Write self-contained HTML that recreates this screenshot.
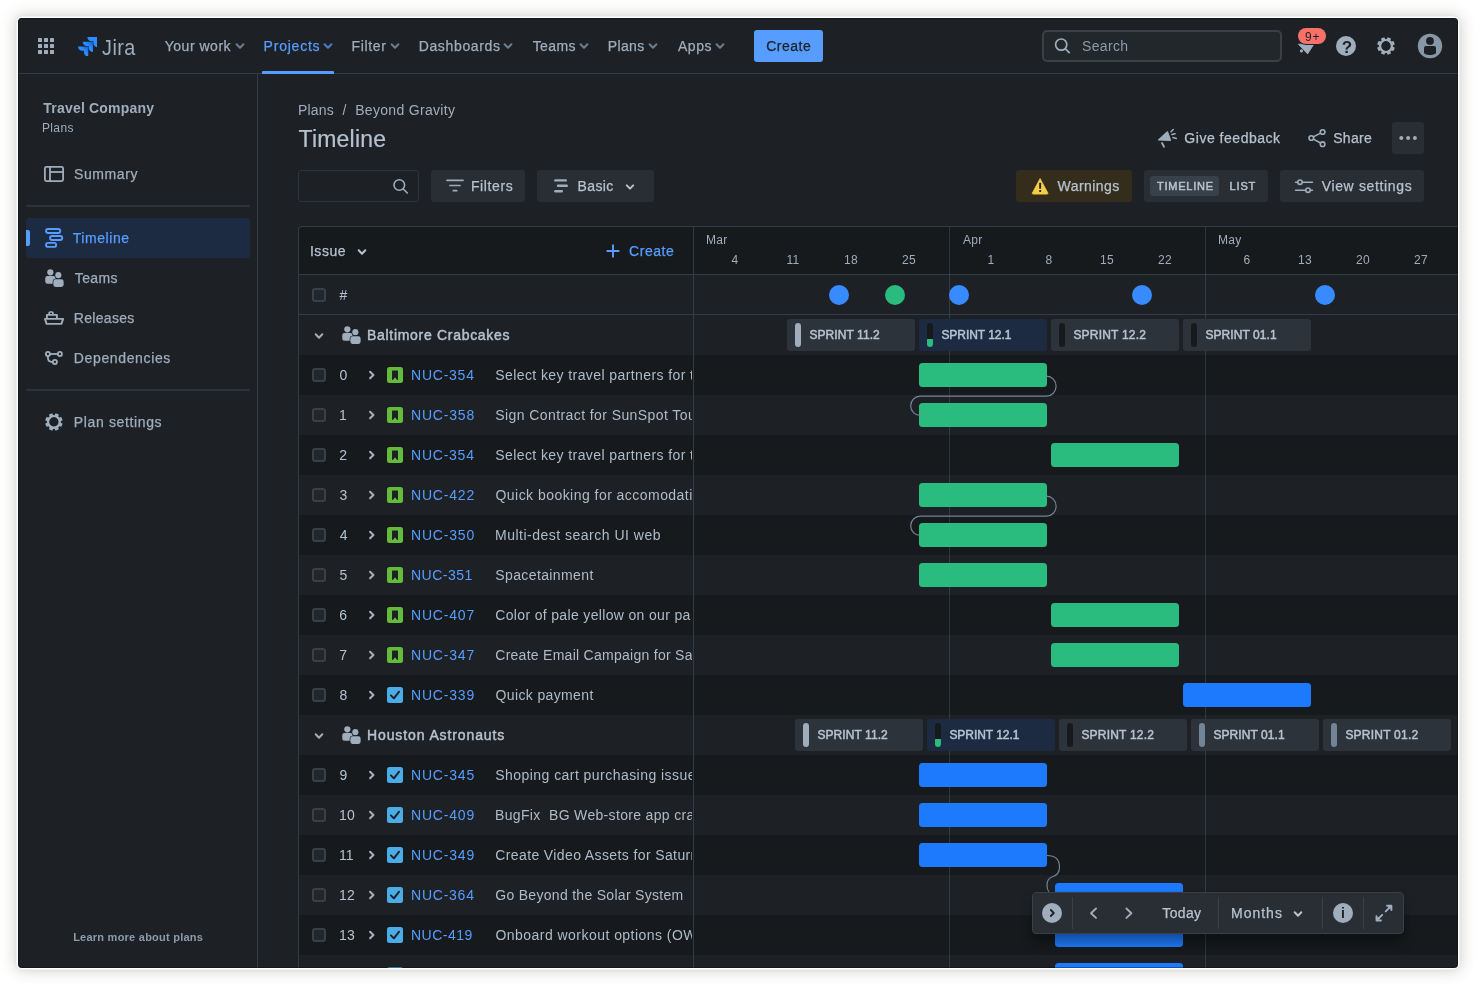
<!DOCTYPE html>
<html lang="en"><head><meta charset="utf-8"><title>Timeline - Beyond Gravity - Jira</title>
<style>
html,body{margin:0;padding:0}
body{width:1476px;height:986px;background:#fff;overflow:hidden;position:relative;font-family:"Liberation Sans",sans-serif;}
.shadow{position:absolute;left:18px;top:18px;width:1440px;height:950px;border-radius:4px;box-shadow:0 0 0 1px #fff,0 0 0 2px rgba(238,242,246,0.85),0 0 5px 1px rgba(40,40,25,0.07),0 0 15px 3px rgba(40,40,25,0.2);}
.win{position:absolute;left:18px;top:18px;width:1440px;height:950px;border-radius:4px;background:#1d2125;overflow:hidden;}
.pgc{position:absolute;left:-18px;top:-18px;width:1476px;height:986px;will-change:transform;}
.edge{position:absolute;left:18px;top:18px;width:1440px;height:950px;border-radius:4px;box-shadow:inset 0 0 0 1px rgba(0,0,0,0.32);pointer-events:none}
.b{position:absolute;display:block}
.t{position:absolute;white-space:pre;line-height:20px;font-size:14px}
</style></head>
<body>
<div class="shadow"></div>
<div class="win"><div class="pgc">
<div class="b" style="left:298px;top:226px;width:1160px;height:49px;background:#161a1d;border-top-left-radius:4px;"></div>
<div class="b" style="left:298px;top:355px;width:1160px;height:40px;background:#161a1d;"></div>
<div class="b" style="left:298px;top:435px;width:1160px;height:40px;background:#161a1d;"></div>
<div class="b" style="left:298px;top:515px;width:1160px;height:40px;background:#161a1d;"></div>
<div class="b" style="left:298px;top:595px;width:1160px;height:40px;background:#161a1d;"></div>
<div class="b" style="left:298px;top:675px;width:1160px;height:40px;background:#161a1d;"></div>
<div class="b" style="left:298px;top:755px;width:1160px;height:40px;background:#161a1d;"></div>
<div class="b" style="left:298px;top:835px;width:1160px;height:40px;background:#161a1d;"></div>
<div class="b" style="left:298px;top:915px;width:1160px;height:40px;background:#161a1d;"></div>
<div class="b" style="left:298px;top:226px;width:1160px;height:760px;border-top:1px solid #333b43;border-left:1px solid #333b43;border-top-left-radius:4px;box-sizing:border-box;"></div>
<div class="b" style="left:298px;top:274px;width:1160px;height:1px;background:#333b43;"></div>
<div class="b" style="left:298px;top:314px;width:1160px;height:1px;background:#333b43;"></div>
<div class="t" style="left:309.95px;top:241px;color:#b6c2cf;letter-spacing:0.537px;-webkit-text-stroke:0.25px;">Issue</div>
<svg class="b" style="left:354.00px;top:243.60px;" width="16.00" height="16.00" viewBox="354.00 243.60 16.00 16.00"><polyline points="358.70,249.90 362.00,253.30 365.30,249.90" fill="none" stroke="#b6c2cf" stroke-width="2" stroke-linecap="round" stroke-linejoin="round"/></svg>
<svg class="b" style="left:605.00px;top:243.00px;" width="16.00" height="16.00" viewBox="605.00 243.00 16.00 16.00"><path d="M613 245.300v11.400M607.300 251h11.400" stroke="#579dff" stroke-width="1.900" stroke-linecap="round" fill="none"/></svg>
<div class="t" style="left:629.05px;top:241px;color:#579dff;letter-spacing:0.550px;-webkit-text-stroke:0.25px;">Create</div>
<div class="b" style="left:312px;top:288px;width:14px;height:14px;background:#22272b;border-radius:3px;border:2px solid #38414a;box-sizing:border-box;"></div>
<div class="t" style="left:339.50px;top:285px;color:#b6c2cf;">#</div>
<svg class="b" style="left:311.00px;top:327.70px;" width="16.00" height="16.00" viewBox="311.00 327.70 16.00 16.00"><polyline points="315.70,334.00 319.00,337.40 322.30,334.00" fill="none" stroke="#9fadbc" stroke-width="2" stroke-linecap="round" stroke-linejoin="round"/></svg>
<svg class="b" style="left:341.8px;top:325.9px;" width="19.0" height="18.5" viewBox="-0.25 -0.25 19 18.5"><g fill="#9fadbc"><circle cx="5.1" cy="3.1" r="3.1"/><path d="M0 9a2.200 2.200 0 0 1 2.200-2.200h6a2.200 2.200 0 0 1 2.200 2.200v5.500h-8.200a2.200 2.200 0 0 1-2.200-2.200z"/><g stroke="#1d2125" stroke-width="1.300" paint-order="stroke"><circle cx="13.1" cy="5.900" r="3.050"/><path d="M8.100 12.400a2.300 2.300 0 0 1 2.300-2.300h5.700a2.300 2.300 0 0 1 2.300 2.300v2.600a2.800 2.800 0 0 1-2.800 2.800h-4.700a2.800 2.800 0 0 1-2.800-2.800z"/></g></g></svg>
<div class="t" style="left:367.00px;top:325px;color:#b6c2cf;letter-spacing:0.700px;-webkit-text-stroke:0.45px;">Baltimore Crabcakes</div>
<svg class="b" style="left:311.00px;top:727.70px;" width="16.00" height="16.00" viewBox="311.00 727.70 16.00 16.00"><polyline points="315.70,734.00 319.00,737.40 322.30,734.00" fill="none" stroke="#9fadbc" stroke-width="2" stroke-linecap="round" stroke-linejoin="round"/></svg>
<svg class="b" style="left:341.8px;top:725.9px;" width="19.0" height="18.5" viewBox="-0.25 -0.25 19 18.5"><g fill="#9fadbc"><circle cx="5.1" cy="3.1" r="3.1"/><path d="M0 9a2.200 2.200 0 0 1 2.200-2.200h6a2.200 2.200 0 0 1 2.200 2.200v5.500h-8.200a2.200 2.200 0 0 1-2.200-2.200z"/><g stroke="#1d2125" stroke-width="1.300" paint-order="stroke"><circle cx="13.1" cy="5.900" r="3.050"/><path d="M8.100 12.400a2.300 2.300 0 0 1 2.300-2.300h5.700a2.300 2.300 0 0 1 2.300 2.300v2.600a2.800 2.800 0 0 1-2.800 2.800h-4.700a2.800 2.800 0 0 1-2.800-2.800z"/></g></g></svg>
<div class="t" style="left:367.00px;top:725px;color:#b6c2cf;letter-spacing:0.891px;-webkit-text-stroke:0.45px;">Houston Astronauts</div>
<div class="b" style="left:0;top:0;width:692px;height:968px;overflow:hidden"><svg class="b" style="left:387px;top:367px;" width="16" height="16" viewBox="0 0 16 16"><rect width="16" height="16" rx="2.500" fill="#64ba3b"/><path d="M5 4.300a.7.700 0 0 1 .7-.7h4.600a.7.700 0 0 1 .7.700v8.300a.4.400 0 0 1-.7.300l-2.300-2.400l-2.300 2.400a.4.400 0 0 1-.7-.3z" fill="#1d2125"/></svg><div class="b" style="left:312px;top:368px;width:14px;height:14px;background:#22272b;border-radius:3px;border:2px solid #38414a;box-sizing:border-box;"></div><div class="t" style="left:339.50px;top:365px;color:#b6c2cf;letter-spacing:0.400px;">0</div><svg class="b" style="left:365.60px;top:368.20px;" width="12.00" height="14.00" viewBox="365.60 368.20 12.00 14.00"><polyline points="369.70,372.00 373.00,375.20 369.70,378.40" fill="none" stroke="#9fadbc" stroke-width="2.200" stroke-linecap="round" stroke-linejoin="round"/></svg><div class="t" style="left:411.00px;top:365px;color:#579dff;letter-spacing:0.767px;">NUC-354</div><div class="t" style="left:495.25px;top:365px;color:#afbbc8;letter-spacing:0.412px;">Select key travel partners for t</div><svg class="b" style="left:387px;top:407px;" width="16" height="16" viewBox="0 0 16 16"><rect width="16" height="16" rx="2.500" fill="#64ba3b"/><path d="M5 4.300a.7.700 0 0 1 .7-.7h4.600a.7.700 0 0 1 .7.700v8.300a.4.400 0 0 1-.7.300l-2.300-2.400l-2.300 2.400a.4.400 0 0 1-.7-.3z" fill="#1d2125"/></svg><div class="b" style="left:312px;top:408px;width:14px;height:14px;background:#22272b;border-radius:3px;border:2px solid #38414a;box-sizing:border-box;"></div><div class="t" style="left:339.00px;top:405px;color:#b6c2cf;letter-spacing:0.400px;">1</div><svg class="b" style="left:365.60px;top:408.20px;" width="12.00" height="14.00" viewBox="365.60 408.20 12.00 14.00"><polyline points="369.70,412.00 373.00,415.20 369.70,418.40" fill="none" stroke="#9fadbc" stroke-width="2.200" stroke-linecap="round" stroke-linejoin="round"/></svg><div class="t" style="left:411.00px;top:405px;color:#579dff;letter-spacing:0.808px;">NUC-358</div><div class="t" style="left:495.25px;top:405px;color:#afbbc8;letter-spacing:0.415px;">Sign Contract for SunSpot Tou</div><svg class="b" style="left:387px;top:447px;" width="16" height="16" viewBox="0 0 16 16"><rect width="16" height="16" rx="2.500" fill="#64ba3b"/><path d="M5 4.300a.7.700 0 0 1 .7-.7h4.600a.7.700 0 0 1 .7.700v8.300a.4.400 0 0 1-.7.300l-2.300-2.400l-2.300 2.400a.4.400 0 0 1-.7-.3z" fill="#1d2125"/></svg><div class="b" style="left:312px;top:448px;width:14px;height:14px;background:#22272b;border-radius:3px;border:2px solid #38414a;box-sizing:border-box;"></div><div class="t" style="left:339.25px;top:445px;color:#b6c2cf;letter-spacing:0.400px;">2</div><svg class="b" style="left:365.60px;top:448.20px;" width="12.00" height="14.00" viewBox="365.60 448.20 12.00 14.00"><polyline points="369.70,452.00 373.00,455.20 369.70,458.40" fill="none" stroke="#9fadbc" stroke-width="2.200" stroke-linecap="round" stroke-linejoin="round"/></svg><div class="t" style="left:411.00px;top:445px;color:#579dff;letter-spacing:0.767px;">NUC-354</div><div class="t" style="left:495.25px;top:445px;color:#afbbc8;letter-spacing:0.412px;">Select key travel partners for t</div><svg class="b" style="left:387px;top:487px;" width="16" height="16" viewBox="0 0 16 16"><rect width="16" height="16" rx="2.500" fill="#64ba3b"/><path d="M5 4.300a.7.700 0 0 1 .7-.7h4.600a.7.700 0 0 1 .7.700v8.300a.4.400 0 0 1-.7.300l-2.300-2.400l-2.300 2.400a.4.400 0 0 1-.7-.3z" fill="#1d2125"/></svg><div class="b" style="left:312px;top:488px;width:14px;height:14px;background:#22272b;border-radius:3px;border:2px solid #38414a;box-sizing:border-box;"></div><div class="t" style="left:339.50px;top:485px;color:#b6c2cf;letter-spacing:0.400px;">3</div><svg class="b" style="left:365.60px;top:488.20px;" width="12.00" height="14.00" viewBox="365.60 488.20 12.00 14.00"><polyline points="369.70,492.00 373.00,495.20 369.70,498.40" fill="none" stroke="#9fadbc" stroke-width="2.200" stroke-linecap="round" stroke-linejoin="round"/></svg><div class="t" style="left:411.00px;top:485px;color:#579dff;letter-spacing:0.808px;">NUC-422</div><div class="t" style="left:495.50px;top:485px;color:#afbbc8;letter-spacing:0.459px;">Quick booking for accomodati</div><svg class="b" style="left:387px;top:527px;" width="16" height="16" viewBox="0 0 16 16"><rect width="16" height="16" rx="2.500" fill="#64ba3b"/><path d="M5 4.300a.7.700 0 0 1 .7-.7h4.600a.7.700 0 0 1 .7.700v8.300a.4.400 0 0 1-.7.300l-2.300-2.400l-2.300 2.400a.4.400 0 0 1-.7-.3z" fill="#1d2125"/></svg><div class="b" style="left:312px;top:528px;width:14px;height:14px;background:#22272b;border-radius:3px;border:2px solid #38414a;box-sizing:border-box;"></div><div class="t" style="left:339.75px;top:525px;color:#b6c2cf;letter-spacing:0.400px;">4</div><svg class="b" style="left:365.60px;top:528.20px;" width="12.00" height="14.00" viewBox="365.60 528.20 12.00 14.00"><polyline points="369.70,532.00 373.00,535.20 369.70,538.40" fill="none" stroke="#9fadbc" stroke-width="2.200" stroke-linecap="round" stroke-linejoin="round"/></svg><div class="t" style="left:411.00px;top:525px;color:#579dff;letter-spacing:0.808px;">NUC-350</div><div class="t" style="left:495.00px;top:525px;color:#afbbc8;letter-spacing:0.496px;">Multi-dest search UI web</div><svg class="b" style="left:387px;top:567px;" width="16" height="16" viewBox="0 0 16 16"><rect width="16" height="16" rx="2.500" fill="#64ba3b"/><path d="M5 4.300a.7.700 0 0 1 .7-.7h4.600a.7.700 0 0 1 .7.700v8.300a.4.400 0 0 1-.7.300l-2.300-2.400l-2.300 2.400a.4.400 0 0 1-.7-.3z" fill="#1d2125"/></svg><div class="b" style="left:312px;top:568px;width:14px;height:14px;background:#22272b;border-radius:3px;border:2px solid #38414a;box-sizing:border-box;"></div><div class="t" style="left:339.50px;top:565px;color:#b6c2cf;letter-spacing:0.400px;">5</div><svg class="b" style="left:365.60px;top:568.20px;" width="12.00" height="14.00" viewBox="365.60 568.20 12.00 14.00"><polyline points="369.70,572.00 373.00,575.20 369.70,578.40" fill="none" stroke="#9fadbc" stroke-width="2.200" stroke-linecap="round" stroke-linejoin="round"/></svg><div class="t" style="left:411.00px;top:565px;color:#579dff;letter-spacing:0.475px;">NUC-351</div><div class="t" style="left:495.25px;top:565px;color:#afbbc8;letter-spacing:0.392px;">Spacetainment</div><svg class="b" style="left:387px;top:607px;" width="16" height="16" viewBox="0 0 16 16"><rect width="16" height="16" rx="2.500" fill="#64ba3b"/><path d="M5 4.300a.7.700 0 0 1 .7-.7h4.600a.7.700 0 0 1 .7.700v8.300a.4.400 0 0 1-.7.300l-2.300-2.400l-2.300 2.400a.4.400 0 0 1-.7-.3z" fill="#1d2125"/></svg><div class="b" style="left:312px;top:608px;width:14px;height:14px;background:#22272b;border-radius:3px;border:2px solid #38414a;box-sizing:border-box;"></div><div class="t" style="left:339.25px;top:605px;color:#b6c2cf;letter-spacing:0.400px;">6</div><svg class="b" style="left:365.60px;top:608.20px;" width="12.00" height="14.00" viewBox="365.60 608.20 12.00 14.00"><polyline points="369.70,612.00 373.00,615.20 369.70,618.40" fill="none" stroke="#9fadbc" stroke-width="2.200" stroke-linecap="round" stroke-linejoin="round"/></svg><div class="t" style="left:411.00px;top:605px;color:#579dff;letter-spacing:0.808px;">NUC-407</div><div class="t" style="left:495.25px;top:605px;color:#afbbc8;letter-spacing:0.341px;">Color of pale yellow on our pa</div><svg class="b" style="left:387px;top:647px;" width="16" height="16" viewBox="0 0 16 16"><rect width="16" height="16" rx="2.500" fill="#64ba3b"/><path d="M5 4.300a.7.700 0 0 1 .7-.7h4.600a.7.700 0 0 1 .7.700v8.300a.4.400 0 0 1-.7.300l-2.300-2.400l-2.300 2.400a.4.400 0 0 1-.7-.3z" fill="#1d2125"/></svg><div class="b" style="left:312px;top:648px;width:14px;height:14px;background:#22272b;border-radius:3px;border:2px solid #38414a;box-sizing:border-box;"></div><div class="t" style="left:339.25px;top:645px;color:#b6c2cf;letter-spacing:0.400px;">7</div><svg class="b" style="left:365.60px;top:648.20px;" width="12.00" height="14.00" viewBox="365.60 648.20 12.00 14.00"><polyline points="369.70,652.00 373.00,655.20 369.70,658.40" fill="none" stroke="#9fadbc" stroke-width="2.200" stroke-linecap="round" stroke-linejoin="round"/></svg><div class="t" style="left:411.00px;top:645px;color:#579dff;letter-spacing:0.808px;">NUC-347</div><div class="t" style="left:495.25px;top:645px;color:#afbbc8;letter-spacing:0.271px;">Create Email Campaign for Sa</div><svg class="b" style="left:387px;top:687px;" width="16" height="16" viewBox="0 0 16 16"><rect width="16" height="16" rx="2.500" fill="#4bade8"/><polyline points="3.900,8.300 6.900,11.300 12.100,4.700" fill="none" stroke="#1d2125" stroke-width="1.900" stroke-linecap="round" stroke-linejoin="round"/></svg><div class="b" style="left:312px;top:688px;width:14px;height:14px;background:#22272b;border-radius:3px;border:2px solid #38414a;box-sizing:border-box;"></div><div class="t" style="left:339.50px;top:685px;color:#b6c2cf;letter-spacing:0.400px;">8</div><svg class="b" style="left:365.60px;top:688.20px;" width="12.00" height="14.00" viewBox="365.60 688.20 12.00 14.00"><polyline points="369.70,692.00 373.00,695.20 369.70,698.40" fill="none" stroke="#9fadbc" stroke-width="2.200" stroke-linecap="round" stroke-linejoin="round"/></svg><div class="t" style="left:411.00px;top:685px;color:#579dff;letter-spacing:0.808px;">NUC-339</div><div class="t" style="left:495.50px;top:685px;color:#afbbc8;letter-spacing:0.371px;">Quick payment</div><svg class="b" style="left:387px;top:767px;" width="16" height="16" viewBox="0 0 16 16"><rect width="16" height="16" rx="2.500" fill="#4bade8"/><polyline points="3.900,8.300 6.900,11.300 12.100,4.700" fill="none" stroke="#1d2125" stroke-width="1.900" stroke-linecap="round" stroke-linejoin="round"/></svg><div class="b" style="left:312px;top:768px;width:14px;height:14px;background:#22272b;border-radius:3px;border:2px solid #38414a;box-sizing:border-box;"></div><div class="t" style="left:339.50px;top:765px;color:#b6c2cf;letter-spacing:0.400px;">9</div><svg class="b" style="left:365.60px;top:768.20px;" width="12.00" height="14.00" viewBox="365.60 768.20 12.00 14.00"><polyline points="369.70,772.00 373.00,775.20 369.70,778.40" fill="none" stroke="#9fadbc" stroke-width="2.200" stroke-linecap="round" stroke-linejoin="round"/></svg><div class="t" style="left:411.00px;top:765px;color:#579dff;letter-spacing:0.808px;">NUC-345</div><div class="t" style="left:495.25px;top:765px;color:#afbbc8;letter-spacing:0.452px;">Shoping cart purchasing issue</div><svg class="b" style="left:387px;top:807px;" width="16" height="16" viewBox="0 0 16 16"><rect width="16" height="16" rx="2.500" fill="#4bade8"/><polyline points="3.900,8.300 6.900,11.300 12.100,4.700" fill="none" stroke="#1d2125" stroke-width="1.900" stroke-linecap="round" stroke-linejoin="round"/></svg><div class="b" style="left:312px;top:808px;width:14px;height:14px;background:#22272b;border-radius:3px;border:2px solid #38414a;box-sizing:border-box;"></div><div class="t" style="left:339.00px;top:805px;color:#b6c2cf;letter-spacing:0.100px;">10</div><svg class="b" style="left:365.60px;top:808.20px;" width="12.00" height="14.00" viewBox="365.60 808.20 12.00 14.00"><polyline points="369.70,812.00 373.00,815.20 369.70,818.40" fill="none" stroke="#9fadbc" stroke-width="2.200" stroke-linecap="round" stroke-linejoin="round"/></svg><div class="t" style="left:411.00px;top:805px;color:#579dff;letter-spacing:0.808px;">NUC-409</div><div class="t" style="left:495.00px;top:805px;color:#afbbc8;letter-spacing:0.330px;">BugFix  BG Web-store app cra</div><svg class="b" style="left:387px;top:847px;" width="16" height="16" viewBox="0 0 16 16"><rect width="16" height="16" rx="2.500" fill="#4bade8"/><polyline points="3.900,8.300 6.900,11.300 12.100,4.700" fill="none" stroke="#1d2125" stroke-width="1.900" stroke-linecap="round" stroke-linejoin="round"/></svg><div class="b" style="left:312px;top:848px;width:14px;height:14px;background:#22272b;border-radius:3px;border:2px solid #38414a;box-sizing:border-box;"></div><div class="t" style="left:339.00px;top:845px;color:#b6c2cf;letter-spacing:0.100px;">11</div><svg class="b" style="left:365.60px;top:848.20px;" width="12.00" height="14.00" viewBox="365.60 848.20 12.00 14.00"><polyline points="369.70,852.00 373.00,855.20 369.70,858.40" fill="none" stroke="#9fadbc" stroke-width="2.200" stroke-linecap="round" stroke-linejoin="round"/></svg><div class="t" style="left:411.00px;top:845px;color:#579dff;letter-spacing:0.808px;">NUC-349</div><div class="t" style="left:495.25px;top:845px;color:#afbbc8;letter-spacing:0.386px;">Create Video Assets for Saturn</div><svg class="b" style="left:387px;top:887px;" width="16" height="16" viewBox="0 0 16 16"><rect width="16" height="16" rx="2.500" fill="#4bade8"/><polyline points="3.900,8.300 6.900,11.300 12.100,4.700" fill="none" stroke="#1d2125" stroke-width="1.900" stroke-linecap="round" stroke-linejoin="round"/></svg><div class="b" style="left:312px;top:888px;width:14px;height:14px;background:#22272b;border-radius:3px;border:2px solid #38414a;box-sizing:border-box;"></div><div class="t" style="left:339.00px;top:885px;color:#b6c2cf;letter-spacing:0.100px;">12</div><svg class="b" style="left:365.60px;top:888.20px;" width="12.00" height="14.00" viewBox="365.60 888.20 12.00 14.00"><polyline points="369.70,892.00 373.00,895.20 369.70,898.40" fill="none" stroke="#9fadbc" stroke-width="2.200" stroke-linecap="round" stroke-linejoin="round"/></svg><div class="t" style="left:411.00px;top:885px;color:#579dff;letter-spacing:0.767px;">NUC-364</div><div class="t" style="left:495.25px;top:885px;color:#afbbc8;letter-spacing:0.296px;">Go Beyond the Solar System</div><svg class="b" style="left:387px;top:927px;" width="16" height="16" viewBox="0 0 16 16"><rect width="16" height="16" rx="2.500" fill="#4bade8"/><polyline points="3.900,8.300 6.900,11.300 12.100,4.700" fill="none" stroke="#1d2125" stroke-width="1.900" stroke-linecap="round" stroke-linejoin="round"/></svg><div class="b" style="left:312px;top:928px;width:14px;height:14px;background:#22272b;border-radius:3px;border:2px solid #38414a;box-sizing:border-box;"></div><div class="t" style="left:339.00px;top:925px;color:#b6c2cf;letter-spacing:0.100px;">13</div><svg class="b" style="left:365.60px;top:928.20px;" width="12.00" height="14.00" viewBox="365.60 928.20 12.00 14.00"><polyline points="369.70,932.00 373.00,935.20 369.70,938.40" fill="none" stroke="#9fadbc" stroke-width="2.200" stroke-linecap="round" stroke-linejoin="round"/></svg><div class="t" style="left:411.00px;top:925px;color:#579dff;letter-spacing:0.475px;">NUC-419</div><div class="t" style="left:495.50px;top:925px;color:#afbbc8;letter-spacing:0.459px;">Onboard workout options (OW</div><svg class="b" style="left:387px;top:967px;" width="16" height="16" viewBox="0 0 16 16"><rect width="16" height="16" rx="2.500" fill="#4bade8"/><polyline points="3.900,8.300 6.900,11.300 12.100,4.700" fill="none" stroke="#1d2125" stroke-width="1.900" stroke-linecap="round" stroke-linejoin="round"/></svg></div>
<div class="b" style="left:693px;top:227px;width:1px;height:760px;background:#333b43;"></div>
<div class="t" style="left:706.00px;top:230px;font-size:12px;color:#9fadbc;letter-spacing:0.300px;">Mar</div>
<div class="t" style="left:963.00px;top:230px;font-size:12px;color:#9fadbc;letter-spacing:0.300px;">Apr</div>
<div class="t" style="left:1218.00px;top:230px;font-size:12px;color:#9fadbc;letter-spacing:0.300px;">May</div>
<div class="t" style="left:715px;top:250px;width:40px;text-align:center;font-size:12px;letter-spacing:0.3px;color:#9fadbc">4</div>
<div class="t" style="left:773px;top:250px;width:40px;text-align:center;font-size:12px;letter-spacing:0.3px;color:#9fadbc">11</div>
<div class="t" style="left:831px;top:250px;width:40px;text-align:center;font-size:12px;letter-spacing:0.3px;color:#9fadbc">18</div>
<div class="t" style="left:889px;top:250px;width:40px;text-align:center;font-size:12px;letter-spacing:0.3px;color:#9fadbc">25</div>
<div class="t" style="left:971px;top:250px;width:40px;text-align:center;font-size:12px;letter-spacing:0.3px;color:#9fadbc">1</div>
<div class="t" style="left:1029px;top:250px;width:40px;text-align:center;font-size:12px;letter-spacing:0.3px;color:#9fadbc">8</div>
<div class="t" style="left:1087px;top:250px;width:40px;text-align:center;font-size:12px;letter-spacing:0.3px;color:#9fadbc">15</div>
<div class="t" style="left:1145px;top:250px;width:40px;text-align:center;font-size:12px;letter-spacing:0.3px;color:#9fadbc">22</div>
<div class="t" style="left:1227px;top:250px;width:40px;text-align:center;font-size:12px;letter-spacing:0.3px;color:#9fadbc">6</div>
<div class="t" style="left:1285px;top:250px;width:40px;text-align:center;font-size:12px;letter-spacing:0.3px;color:#9fadbc">13</div>
<div class="t" style="left:1343px;top:250px;width:40px;text-align:center;font-size:12px;letter-spacing:0.3px;color:#9fadbc">20</div>
<div class="t" style="left:1401px;top:250px;width:40px;text-align:center;font-size:12px;letter-spacing:0.3px;color:#9fadbc">27</div>
<div class="b" style="left:949px;top:227px;width:1px;height:760px;background:rgba(166,197,226,0.16);"></div>
<div class="b" style="left:1205px;top:227px;width:1px;height:760px;background:rgba(166,197,226,0.16);"></div>
<div class="b" style="left:829px;top:285px;width:20px;height:20px;background:#388bff;border-radius:10px;"></div>
<div class="b" style="left:885px;top:285px;width:20px;height:20px;background:#2abb7f;border-radius:10px;"></div>
<div class="b" style="left:949px;top:285px;width:20px;height:20px;background:#388bff;border-radius:10px;"></div>
<div class="b" style="left:1132px;top:285px;width:20px;height:20px;background:#388bff;border-radius:10px;"></div>
<div class="b" style="left:1315px;top:285px;width:20px;height:20px;background:#388bff;border-radius:10px;"></div>
<div class="b" style="left:787px;top:319px;width:128px;height:32px;background:#2c333a;border-radius:3px;"></div><div class="b" style="left:795px;top:323px;width:6px;height:24px;background:#9fadbc;border-radius:3px;"></div><div class="t" style="left:809.40px;top:325px;font-size:12px;color:#b6c2cf;letter-spacing:0.080px;-webkit-text-stroke:0.5px;">SPRINT 11.2</div>
<div class="b" style="left:919px;top:319px;width:128px;height:32px;background:#1c2b41;border-radius:3px;"></div><div class="b" style="left:927px;top:323px;width:6px;height:24px;background:#161a1d;border-radius:3px;overflow:hidden;"><div style="position:absolute;left:0;bottom:0;width:6px;height:8px;background:#2abb7f"></div></div><div class="t" style="left:941.40px;top:325px;font-size:12px;color:#b6c2cf;letter-spacing:-0.050px;-webkit-text-stroke:0.5px;">SPRINT 12.1</div>
<div class="b" style="left:1051px;top:319px;width:128px;height:32px;background:#2c333a;border-radius:3px;"></div><div class="b" style="left:1059px;top:323px;width:6px;height:24px;background:#161a1d;border-radius:3px;"></div><div class="t" style="left:1073.40px;top:325px;font-size:12px;color:#b6c2cf;letter-spacing:0.200px;-webkit-text-stroke:0.5px;">SPRINT 12.2</div>
<div class="b" style="left:1183px;top:319px;width:128px;height:32px;background:#2c333a;border-radius:3px;"></div><div class="b" style="left:1191px;top:323px;width:6px;height:24px;background:#161a1d;border-radius:3px;"></div><div class="t" style="left:1205.40px;top:325px;font-size:12px;color:#b6c2cf;letter-spacing:0.070px;-webkit-text-stroke:0.5px;">SPRINT 01.1</div>
<div class="b" style="left:795px;top:719px;width:128px;height:32px;background:#2c333a;border-radius:3px;"></div><div class="b" style="left:803px;top:723px;width:6px;height:24px;background:#9fadbc;border-radius:3px;"></div><div class="t" style="left:817.40px;top:725px;font-size:12px;color:#b6c2cf;letter-spacing:0.080px;-webkit-text-stroke:0.5px;">SPRINT 11.2</div>
<div class="b" style="left:927px;top:719px;width:128px;height:32px;background:#1c2b41;border-radius:3px;"></div><div class="b" style="left:935px;top:723px;width:6px;height:24px;background:#161a1d;border-radius:3px;overflow:hidden;"><div style="position:absolute;left:0;bottom:0;width:6px;height:8px;background:#2abb7f"></div></div><div class="t" style="left:949.40px;top:725px;font-size:12px;color:#b6c2cf;letter-spacing:-0.050px;-webkit-text-stroke:0.5px;">SPRINT 12.1</div>
<div class="b" style="left:1059px;top:719px;width:128px;height:32px;background:#2c333a;border-radius:3px;"></div><div class="b" style="left:1067px;top:723px;width:6px;height:24px;background:#161a1d;border-radius:3px;"></div><div class="t" style="left:1081.40px;top:725px;font-size:12px;color:#b6c2cf;letter-spacing:0.200px;-webkit-text-stroke:0.5px;">SPRINT 12.2</div>
<div class="b" style="left:1191px;top:719px;width:128px;height:32px;background:#2c333a;border-radius:3px;"></div><div class="b" style="left:1199px;top:723px;width:6px;height:24px;background:#738496;border-radius:3px;"></div><div class="t" style="left:1213.40px;top:725px;font-size:12px;color:#b6c2cf;letter-spacing:0.070px;-webkit-text-stroke:0.5px;">SPRINT 01.1</div>
<div class="b" style="left:1323px;top:719px;width:128px;height:32px;background:#2c333a;border-radius:3px;"></div><div class="b" style="left:1331px;top:723px;width:6px;height:24px;background:#738496;border-radius:3px;"></div><div class="t" style="left:1345.40px;top:725px;font-size:12px;color:#b6c2cf;letter-spacing:0.230px;-webkit-text-stroke:0.5px;">SPRINT 01.2</div>
<div class="b" style="left:919px;top:363px;width:128px;height:24px;background:#2abb7f;border-radius:3.5px;"></div>
<div class="b" style="left:919px;top:403px;width:128px;height:24px;background:#2abb7f;border-radius:3.5px;"></div>
<div class="b" style="left:1051px;top:443px;width:128px;height:24px;background:#2abb7f;border-radius:3.5px;"></div>
<div class="b" style="left:919px;top:483px;width:128px;height:24px;background:#2abb7f;border-radius:3.5px;"></div>
<div class="b" style="left:919px;top:523px;width:128px;height:24px;background:#2abb7f;border-radius:3.5px;"></div>
<div class="b" style="left:919px;top:563px;width:128px;height:24px;background:#2abb7f;border-radius:3.5px;"></div>
<div class="b" style="left:1051px;top:603px;width:128px;height:24px;background:#2abb7f;border-radius:3.5px;"></div>
<div class="b" style="left:1051px;top:643px;width:128px;height:24px;background:#2abb7f;border-radius:3.5px;"></div>
<div class="b" style="left:1183px;top:683px;width:128px;height:24px;background:#1d7afc;border-radius:3.5px;"></div>
<div class="b" style="left:919px;top:763px;width:128px;height:24px;background:#1d7afc;border-radius:3.5px;"></div>
<div class="b" style="left:919px;top:803px;width:128px;height:24px;background:#1d7afc;border-radius:3.5px;"></div>
<div class="b" style="left:919px;top:843px;width:128px;height:24px;background:#1d7afc;border-radius:3.5px;"></div>
<div class="b" style="left:1055px;top:883px;width:128px;height:24px;background:#1d7afc;border-radius:3.5px;"></div>
<div class="b" style="left:1055px;top:923px;width:128px;height:24px;background:#1d7afc;border-radius:3.5px;"></div>
<div class="b" style="left:1055px;top:963px;width:128px;height:24px;background:#1d7afc;border-radius:3.5px;"></div>
<svg class="b" style="left:0;top:0" width="1476" height="986"><g fill="none" stroke="#738496" stroke-width="1.200"><path d="M1046.500 376.2a9.600 10 0 0 1 0 20H920.200a9.500 9.600 0 0 0 0 19.200" /><path d="M1046.500 496.2a9.600 10 0 0 1 0 20H920.200a9.500 9.600 0 0 0 0 19.200" /><path d="M1047 855.500c8.500 0 12.500 4 12.500 11.500c0 6-3 8.500-7 9.700c-3.800 1.200-5.500 3.600-5.500 8.300c0 6 3 10 8 10"/></g></svg>
<div class="b" style="left:1032px;top:892px;width:372px;height:42px;background:#282e33;border-radius:4px;border:1px solid #38414a;box-sizing:border-box;box-shadow:0 8px 12px rgba(3,4,4,0.36),0 0 1px rgba(3,4,4,0.5);"></div>
<div class="b" style="left:1042px;top:903px;width:20px;height:20px;background:#9fadbc;border-radius:10px;"></div>
<svg class="b" style="left:1046.00px;top:907.00px;" width="12.00" height="12.00" viewBox="1046.00 907.00 12.00 12.00"><polyline points="1050.800,910 1053.800,913 1050.800,916" fill="none" stroke="#1d2125" stroke-width="1.800" stroke-linecap="round" stroke-linejoin="round"/></svg>
<div class="b" style="left:1072px;top:897px;width:1px;height:32px;background:#38414a;"></div>
<div class="b" style="left:1218px;top:897px;width:1px;height:32px;background:#38414a;"></div>
<div class="b" style="left:1322px;top:897px;width:1px;height:32px;background:#38414a;"></div>
<div class="b" style="left:1363px;top:897px;width:1px;height:32px;background:#38414a;"></div>
<svg class="b" style="left:1086.00px;top:905.00px;" width="14.00" height="16.00" viewBox="1086.00 905.00 14.00 16.00"><polyline points="1096,908.500 1091,913.200 1096,917.900" fill="none" stroke="#9fadbc" stroke-width="1.900" stroke-linecap="round" stroke-linejoin="round"/></svg>
<svg class="b" style="left:1122.00px;top:905.00px;" width="14.00" height="16.00" viewBox="1122.00 905.00 14.00 16.00"><polyline points="1126.400,908.500 1131.400,913.200 1126.400,917.900" fill="none" stroke="#9fadbc" stroke-width="1.900" stroke-linecap="round" stroke-linejoin="round"/></svg>
<div class="t" style="left:1162.25px;top:903px;color:#b6c2cf;letter-spacing:0.375px;-webkit-text-stroke:0.25px;">Today</div>
<div class="t" style="left:1231.00px;top:903px;color:#b6c2cf;letter-spacing:1.000px;-webkit-text-stroke:0.25px;">Months</div>
<svg class="b" style="left:1290.00px;top:905.80px;" width="16.00" height="16.00" viewBox="1290.00 905.80 16.00 16.00"><polyline points="1294.70,912.10 1298.00,915.50 1301.30,912.10" fill="none" stroke="#b6c2cf" stroke-width="2" stroke-linecap="round" stroke-linejoin="round"/></svg>
<div class="b" style="left:1333px;top:903px;width:20px;height:20px;background:#9fadbc;border-radius:10px;"></div>
<div class="t" style="left:1340.90px;top:903px;color:#1d2125;font-weight:700;">i</div>
<svg class="b" style="left:1374.00px;top:903.00px;" width="20.00" height="20.00" viewBox="1374.00 903.00 20.00 20.00"><g fill="none" stroke="#9fadbc" stroke-width="1.900" stroke-linecap="round" stroke-linejoin="round"><path d="M1387 905.700h4.400v4.400M1391 906.100l-5.300 5.300"/><path d="M1376.500 916.100v4.400h4.400M1376.900 920.100l5.300-5.300"/><path d="M1388.700 907h1.400v1.400zM1377.800 917.400v1.400h1.400z" fill="#9fadbc" stroke-width="1"/></g></svg>
<div class="t" style="left:298.10px;top:100px;color:#9fadbc;letter-spacing:0.150px;">Plans</div>
<div class="t" style="left:342.40px;top:100px;color:#9fadbc;">/</div>
<div class="t" style="left:355.20px;top:100px;color:#9fadbc;letter-spacing:0.308px;">Beyond Gravity</div>
<div class="t" style="left:298.60px;top:129px;font-size:23px;color:#b6c2cf;letter-spacing:0.186px;-webkit-text-stroke:0.2px;">Timeline</div>
<div class="b" style="left:298px;top:170px;width:121px;height:32px;background:#1d2125;border-radius:3px;border:1px solid #2c333a;box-sizing:border-box;"></div>
<svg class="b" style="left:391.00px;top:176.00px;" width="20.00" height="20.00" viewBox="391.00 176.00 20.00 20.00"><circle cx="399.300" cy="185" r="5.300" fill="none" stroke="#9fadbc" stroke-width="1.600"/><line x1="403.300" y1="189" x2="407.300" y2="193" stroke="#9fadbc" stroke-width="1.600" stroke-linecap="round"/></svg>
<div class="b" style="left:431px;top:170px;width:94px;height:32px;background:#282e33;border-radius:3px;"></div>
<svg class="b" style="left:444.00px;top:177.00px;" width="22.00" height="17.00" viewBox="444.00 177.00 22.00 17.00"><g stroke="#9fadbc" stroke-width="1.700" stroke-linecap="round"><line x1="447" y1="180.300" x2="463" y2="180.300"/><line x1="450" y1="185.500" x2="460" y2="185.500"/><line x1="453.300" y1="190.700" x2="456.700" y2="190.700"/></g></svg>
<div class="t" style="left:470.90px;top:176px;color:#b6c2cf;letter-spacing:0.625px;-webkit-text-stroke:0.25px;">Filters</div>
<div class="b" style="left:537px;top:170px;width:117px;height:32px;background:#282e33;border-radius:3px;"></div>
<svg class="b" style="left:552.00px;top:177.00px;" width="18.00" height="17.00" viewBox="552.00 177.00 18.00 17.00"><g stroke="#9fadbc" stroke-width="2.400" stroke-linecap="round"><line x1="555.400" y1="180.400" x2="565.800" y2="180.400"/><line x1="558" y1="185.800" x2="566.800" y2="185.800"/><line x1="555.400" y1="191.200" x2="561.800" y2="191.200"/></g></svg>
<div class="t" style="left:577.60px;top:176px;color:#b6c2cf;letter-spacing:0.350px;-webkit-text-stroke:0.25px;">Basic</div>
<svg class="b" style="left:622.00px;top:178.50px;" width="16.00" height="16.00" viewBox="622.00 178.50 16.00 16.00"><polyline points="626.80,184.90 630.00,188.10 633.20,184.90" fill="none" stroke="#b6c2cf" stroke-width="2" stroke-linecap="round" stroke-linejoin="round"/></svg>
<svg class="b" style="left:1156.00px;top:127.00px;" width="23.00" height="22.00" viewBox="1156.00 127.00 23.00 22.00"><g fill="#9fadbc" stroke="#9fadbc" stroke-linecap="round"><path d="M1158.500 139.900l9-8.100l3 8.500z" stroke-width="1.200" stroke-linejoin="round"/><path d="M1162 143l2 3.700" stroke-width="1.800" fill="none"/><path d="M1171 131.800l2.200-2.300M1171.900 134.500l3.200-.8M1172.900 137.600l3.400.9" stroke-width="1.500" fill="none"/></g></svg>
<div class="t" style="left:1184.35px;top:128px;color:#b6c2cf;letter-spacing:0.521px;-webkit-text-stroke:0.25px;">Give feedback</div>
<svg class="b" style="left:1307.00px;top:128.00px;" width="20.00" height="20.00" viewBox="1307.00 128.00 20.00 20.00"><g fill="none" stroke="#9fadbc" stroke-width="1.600"><circle cx="1322.600" cy="132" r="2.300"/><circle cx="1311.300" cy="138" r="2.300"/><circle cx="1322.600" cy="144.200" r="2.300"/><line x1="1313.400" y1="136.900" x2="1320.500" y2="133.100"/><line x1="1313.400" y1="139.100" x2="1320.500" y2="143"/></g></svg>
<div class="t" style="left:1333.15px;top:128px;color:#b6c2cf;letter-spacing:0.325px;-webkit-text-stroke:0.25px;">Share</div>
<div class="b" style="left:1392px;top:122px;width:32px;height:32px;background:#282e33;border-radius:3px;"></div>
<svg class="b" style="left:1398.00px;top:134.00px;" width="20.00" height="8.00" viewBox="1398.00 134.00 20.00 8.00"><g fill="#9fadbc"><circle cx="1401.300" cy="138" r="2"/><circle cx="1408.100" cy="138" r="2"/><circle cx="1414.900" cy="138" r="2"/></g></svg>
<div class="b" style="left:1016px;top:170px;width:116px;height:32px;background:#352d1c;border-radius:3px;"></div>
<svg class="b" style="left:1030.00px;top:177.00px;" width="20.00" height="19.00" viewBox="1030.00 177.00 20.00 19.00"><path d="M1040.100 178.600l7.700 14.300a.8.800 0 0 1-.7 1.200h-14a.8.800 0 0 1-.7-1.200z" fill="#f5cd47" stroke="#f5cd47" stroke-width="0.800" stroke-linejoin="round"/><rect x="1039.200" y="182.700" width="1.900" height="6.100" rx="0.500" fill="#1d2125"/><rect x="1039.200" y="190" width="1.900" height="1.900" rx="0.400" fill="#1d2125"/></svg>
<div class="t" style="left:1057.50px;top:176px;color:#b6c2cf;letter-spacing:0.464px;-webkit-text-stroke:0.25px;">Warnings</div>
<div class="b" style="left:1144px;top:170px;width:124px;height:32px;background:#282e33;border-radius:3px;"></div>
<div class="b" style="left:1150px;top:176px;width:69px;height:20px;background:#38414a;border-radius:3px;"></div>
<div class="t" style="left:1157.05px;top:176px;font-size:11px;color:#b6c2cf;letter-spacing:0.743px;-webkit-text-stroke:0.5px;">TIMELINE</div>
<div class="t" style="left:1229.45px;top:176px;font-size:11px;color:#b6c2cf;letter-spacing:0.883px;-webkit-text-stroke:0.5px;">LIST</div>
<div class="b" style="left:1280px;top:170px;width:144px;height:32px;background:#282e33;border-radius:3px;"></div>
<svg class="b" style="left:1294.00px;top:178.00px;" width="20.00" height="16.00" viewBox="1294.00 178.00 20.00 16.00"><g fill="none" stroke="#9fadbc" stroke-width="1.600" stroke-linecap="round"><line x1="1295.600" y1="182.200" x2="1297.500" y2="182.200"/><circle cx="1300" cy="182.200" r="2.200"/><line x1="1302.500" y1="182.200" x2="1312.400" y2="182.200"/><line x1="1295.600" y1="190.200" x2="1305.500" y2="190.200"/><circle cx="1308" cy="190.200" r="2.200"/><line x1="1310.500" y1="190.200" x2="1312.400" y2="190.200"/></g></svg>
<div class="t" style="left:1321.70px;top:176px;color:#b6c2cf;letter-spacing:0.646px;-webkit-text-stroke:0.25px;">View settings</div>
<div class="b" style="left:257px;top:74px;width:1px;height:894px;background:#333b43;"></div>
<div class="t" style="left:43.30px;top:98px;color:#9fadbc;font-weight:700;letter-spacing:0.200px;">Travel Company</div>
<div class="t" style="left:42.00px;top:118px;font-size:12px;color:#9fadbc;letter-spacing:0.350px;">Plans</div>
<svg class="b" style="left:43.00px;top:165.00px;" width="22.00" height="18.00" viewBox="43.00 165.00 22.00 18.00"><rect x="44.9" y="166.9" width="18.2" height="14.2" rx="1.5" fill="none" stroke="#9fadbc" stroke-width="1.800"/><line x1="50" y1="167" x2="50" y2="181" stroke="#9fadbc" stroke-width="1.800"/><line x1="50" y1="172" x2="63" y2="172" stroke="#9fadbc" stroke-width="1.800"/></svg>
<div class="t" style="left:74.05px;top:164px;color:#9fadbc;letter-spacing:0.583px;-webkit-text-stroke:0.25px;">Summary</div>
<div class="b" style="left:26px;top:205px;width:224px;height:2px;background:#2c333a;border-radius:1px;"></div>
<div class="b" style="left:26px;top:218px;width:224px;height:40px;background:#1c2b41;border-radius:3px;"></div>
<div class="b" style="left:26px;top:230px;width:4px;height:16px;background:#579dff;border-radius:0 2px 2px 0;"></div>
<svg class="b" style="left:44.00px;top:227.00px;" width="20.00" height="22.00" viewBox="44.00 227.00 20.00 22.00"><g fill="none" stroke="#579dff" stroke-width="1.900"><rect x="46.05" y="228.95" width="14.2" height="4" rx="2"/><rect x="50.050" y="236" width="12.200" height="4" rx="2"/><rect x="46.050" y="242.900" width="10.100" height="4" rx="2"/></g></svg>
<div class="t" style="left:72.65px;top:228px;color:#579dff;letter-spacing:0.586px;-webkit-text-stroke:0.25px;">Timeline</div>
<svg class="b" style="left:44.8px;top:269px;" width="19.0" height="18.5" viewBox="-0.25 -0.25 19 18.5"><g fill="#9fadbc"><circle cx="5.1" cy="3.1" r="3.1"/><path d="M0 9a2.200 2.200 0 0 1 2.200-2.200h6a2.200 2.200 0 0 1 2.200 2.200v5.500h-8.200a2.200 2.200 0 0 1-2.200-2.200z"/><g stroke="#1d2125" stroke-width="1.300" paint-order="stroke"><circle cx="13.1" cy="5.900" r="3.050"/><path d="M8.100 12.400a2.300 2.300 0 0 1 2.300-2.300h5.700a2.300 2.300 0 0 1 2.300 2.300v2.600a2.800 2.800 0 0 1-2.800 2.800h-4.700a2.800 2.800 0 0 1-2.800-2.800z"/></g></g></svg>
<div class="t" style="left:74.85px;top:268px;color:#9fadbc;letter-spacing:0.350px;-webkit-text-stroke:0.25px;">Teams</div>
<svg class="b" style="left:43.00px;top:310.00px;" width="22.00" height="17.00" viewBox="43.00 310.00 22.00 17.00"><g fill="none" stroke="#9fadbc" stroke-width="1.900" stroke-linejoin="round"><path d="M45 318.900h18.100l-1.700 5h-14.800z"/><path d="M46.900 318.500v-3.600h10v3.600"/><path d="M49.200 314.600v-1.700a.9.900 0 0 1 .9-.9h1.900a.9.900 0 0 1 .9.900v1.700" stroke-width="1.700"/></g></svg>
<div class="t" style="left:73.80px;top:308px;color:#9fadbc;letter-spacing:0.300px;-webkit-text-stroke:0.25px;">Releases</div>
<svg class="b" style="left:44.00px;top:350.00px;" width="20.00" height="16.00" viewBox="44.00 350.00 20.00 16.00"><g fill="none" stroke="#9fadbc" stroke-width="1.800"><circle cx="47.900" cy="354" r="2.050"/><circle cx="59.900" cy="354" r="2.050"/><circle cx="54.900" cy="362" r="2.050"/><line x1="50" y1="354" x2="57.800" y2="354"/><path d="M47.900 356.100v1.600c0 2.800 1.600 4.300 4.900 4.300"/></g></svg>
<div class="t" style="left:73.80px;top:348px;color:#9fadbc;letter-spacing:0.636px;-webkit-text-stroke:0.25px;">Dependencies</div>
<div class="b" style="left:26px;top:389px;width:224px;height:2px;background:#2c333a;border-radius:1px;"></div>
<svg class="b" style="left:43.00px;top:411.00px;" width="21.80" height="21.80" viewBox="43.00 411.00 21.80 21.80"><g stroke-linejoin="round"><path d="M54.48 415.16 L55.64 413.17 L58.84 414.50 L58.25 416.72 L59.08 417.55 L61.30 416.96 L62.63 420.16 L60.64 421.32 L60.64 422.48 L62.63 423.64 L61.30 426.84 L59.08 426.25 L58.25 427.08 L58.84 429.30 L55.64 430.63 L54.48 428.64 L53.32 428.64 L52.16 430.63 L48.96 429.30 L49.55 427.08 L48.72 426.25 L46.50 426.84 L45.17 423.64 L47.16 422.48 L47.16 421.32 L45.17 420.16 L46.50 416.96 L48.72 417.55 L49.55 416.72 L48.96 414.50 L52.16 413.17 L53.32 415.16Z M49.05 421.90 a4.85 4.85 0 1 0 9.70 0 a4.85 4.85 0 1 0 -9.70 0Z" fill="#9fadbc" fill-rule="evenodd"/><circle cx="53.9" cy="421.9" r="5.81" fill="none" stroke="#9fadbc" stroke-width="1.91"/></g></svg>
<div class="t" style="left:73.80px;top:412px;color:#9fadbc;letter-spacing:0.638px;-webkit-text-stroke:0.25px;">Plan settings</div>
<div class="t" style="left:73.15px;top:927px;font-size:11px;color:#8c9bab;font-weight:700;letter-spacing:0.243px;">Learn more about plans</div>
<div class="b" style="left:18px;top:73px;width:1440px;height:1px;background:#333b43;"></div>
<svg class="b" style="left:38px;top:38px;" width="16" height="16" viewBox="0 0 16 16"><rect x="0" y="0" width="4" height="4" rx="0.6" fill="#9fadbc"/><rect x="6" y="0" width="4" height="4" rx="0.6" fill="#9fadbc"/><rect x="12" y="0" width="4" height="4" rx="0.6" fill="#9fadbc"/><rect x="0" y="6" width="4" height="4" rx="0.6" fill="#9fadbc"/><rect x="6" y="6" width="4" height="4" rx="0.6" fill="#9fadbc"/><rect x="12" y="6" width="4" height="4" rx="0.6" fill="#9fadbc"/><rect x="0" y="12" width="4" height="4" rx="0.6" fill="#9fadbc"/><rect x="6" y="12" width="4" height="4" rx="0.6" fill="#9fadbc"/><rect x="12" y="12" width="4" height="4" rx="0.6" fill="#9fadbc"/></svg>
<svg class="b" style="left:77.8px;top:36.6px;" width="19.6" height="19.6" viewBox="2 2 20 20"><defs><linearGradient id="jg1" x1="98%" y1="0%" x2="58%" y2="41%"><stop offset="18%" stop-color="#0c66e4"/><stop offset="100%" stop-color="#2b8bff"/></linearGradient></defs><path d="M11.53 2c0 2.4 1.97 4.35 4.35 4.35h1.78v1.7c0 2.4 1.94 4.34 4.34 4.35V2.84a.84.84 0 0 0-.84-.84h-9.63z" fill="#2b8bff"/><path d="M6.77 6.8a4.36 4.36 0 0 0 4.34 4.34h1.8v1.72a4.36 4.36 0 0 0 4.34 4.34V7.63a.84.84 0 0 0-.83-.83H6.77z" fill="url(#jg1)"/><path d="M2 11.6c0 2.4 1.95 4.34 4.35 4.34h1.78v1.72c.01 2.39 1.95 4.34 4.34 4.34v-9.57a.84.84 0 0 0-.84-.84H2z" fill="url(#jg1)"/></svg>
<div class="t" style="left:102.20px;top:38px;font-size:22.5px;color:#9fadbc;letter-spacing:0.550px;transform:scaleX(0.88);transform-origin:0 0;">Jira</div>
<div class="t" style="left:164.75px;top:36px;color:#9fadbc;letter-spacing:0.512px;-webkit-text-stroke:0.25px;">Your work</div>
<svg class="b" style="left:231.80px;top:38.30px;" width="16.00" height="16.00" viewBox="231.80 38.30 16.00 16.00"><polyline points="236.40,44.60 239.80,48.00 243.20,44.60" fill="none" stroke="#6e7c8c" stroke-width="2" stroke-linecap="round" stroke-linejoin="round"/></svg>
<div class="t" style="left:263.60px;top:36px;color:#579dff;letter-spacing:0.771px;-webkit-text-stroke:0.25px;">Projects</div>
<svg class="b" style="left:320.30px;top:38.30px;" width="16.00" height="16.00" viewBox="320.30 38.30 16.00 16.00"><polyline points="324.90,44.60 328.30,48.00 331.70,44.60" fill="none" stroke="#4b7dc8" stroke-width="2" stroke-linecap="round" stroke-linejoin="round"/></svg>
<div class="t" style="left:351.60px;top:36px;color:#9fadbc;letter-spacing:0.620px;-webkit-text-stroke:0.25px;">Filter</div>
<svg class="b" style="left:387.00px;top:38.30px;" width="16.00" height="16.00" viewBox="387.00 38.30 16.00 16.00"><polyline points="391.60,44.60 395.00,48.00 398.40,44.60" fill="none" stroke="#6e7c8c" stroke-width="2" stroke-linecap="round" stroke-linejoin="round"/></svg>
<div class="t" style="left:418.70px;top:36px;color:#9fadbc;letter-spacing:0.644px;-webkit-text-stroke:0.25px;">Dashboards</div>
<svg class="b" style="left:500.30px;top:38.30px;" width="16.00" height="16.00" viewBox="500.30 38.30 16.00 16.00"><polyline points="504.90,44.60 508.30,48.00 511.70,44.60" fill="none" stroke="#6e7c8c" stroke-width="2" stroke-linecap="round" stroke-linejoin="round"/></svg>
<div class="t" style="left:532.65px;top:36px;color:#9fadbc;letter-spacing:0.425px;-webkit-text-stroke:0.25px;">Teams</div>
<svg class="b" style="left:576.00px;top:38.30px;" width="16.00" height="16.00" viewBox="576.00 38.30 16.00 16.00"><polyline points="580.60,44.60 584.00,48.00 587.40,44.60" fill="none" stroke="#6e7c8c" stroke-width="2" stroke-linecap="round" stroke-linejoin="round"/></svg>
<div class="t" style="left:607.70px;top:36px;color:#9fadbc;letter-spacing:0.400px;-webkit-text-stroke:0.25px;">Plans</div>
<svg class="b" style="left:645.00px;top:38.30px;" width="16.00" height="16.00" viewBox="645.00 38.30 16.00 16.00"><polyline points="649.60,44.60 653.00,48.00 656.40,44.60" fill="none" stroke="#6e7c8c" stroke-width="2" stroke-linecap="round" stroke-linejoin="round"/></svg>
<div class="t" style="left:677.90px;top:36px;color:#9fadbc;letter-spacing:0.567px;-webkit-text-stroke:0.25px;">Apps</div>
<svg class="b" style="left:712.40px;top:38.30px;" width="16.00" height="16.00" viewBox="712.40 38.30 16.00 16.00"><polyline points="717.00,44.60 720.40,48.00 723.80,44.60" fill="none" stroke="#6e7c8c" stroke-width="2" stroke-linecap="round" stroke-linejoin="round"/></svg>
<div class="b" style="left:262px;top:71px;width:72px;height:3px;background:#579dff;border-radius:1px 1px 0 0;"></div>
<div class="b" style="left:754px;top:30px;width:69px;height:32px;background:#579dff;border-radius:3px;"></div>
<div class="t" style="left:766.15px;top:36px;color:#1d2125;letter-spacing:0.530px;-webkit-text-stroke:0.25px;">Create</div>
<div class="b" style="left:1042px;top:30px;width:240px;height:32px;background:#22272b;border-radius:5px;border:2px solid #38414a;box-sizing:border-box;"></div>
<svg class="b" style="left:1053px;top:36px;" width="20" height="20" viewBox="0 0 20 20"><circle cx="8.2" cy="8.6" r="5.6" fill="none" stroke="#9fadbc" stroke-width="1.7"/><line x1="12.4" y1="12.8" x2="16.2" y2="16.6" stroke="#9fadbc" stroke-width="1.7" stroke-linecap="round"/></svg>
<div class="t" style="left:1082.05px;top:36px;color:#8c9bab;letter-spacing:0.330px;">Search</div>
<svg class="b" style="left:1296.00px;top:42.00px;" width="20.00" height="14.00" viewBox="1296.00 42.00 20.00 14.00"><path d="M1298.300 44.200h15.600l-6.300 9.700z" fill="#9fadbc" stroke="#9fadbc" stroke-width="0.800" stroke-linejoin="round"/><circle cx="1301.500" cy="50.900" r="1.600" fill="#9fadbc"/></svg>
<div class="b" style="left:1297px;top:27px;width:30px;height:18px;background:#1d2125;border-radius:9px;"></div>
<div class="b" style="left:1298px;top:28px;width:28px;height:16px;background:#f87168;border-radius:8px;"></div>
<div class="t" style="left:1305.10px;top:27px;font-size:12px;color:#1d2125;letter-spacing:0.750px;">9+</div>
<div class="b" style="left:1336px;top:36px;width:20px;height:20px;background:#9fadbc;border-radius:10px;"></div>
<div class="t" style="left:1341.65px;top:38px;font-size:17px;color:#1d2125;font-weight:700;">?</div>
<svg class="b" style="left:1374.70px;top:34.80px;" width="22.00" height="22.00" viewBox="1374.70 34.80 22.00 22.00"><g stroke-linejoin="round"><path d="M1386.29 38.99 L1387.46 36.97 L1390.70 38.32 L1390.10 40.56 L1390.94 41.40 L1393.18 40.80 L1394.53 44.04 L1392.51 45.21 L1392.51 46.39 L1394.53 47.56 L1393.18 50.80 L1390.94 50.20 L1390.10 51.04 L1390.70 53.28 L1387.46 54.63 L1386.29 52.61 L1385.11 52.61 L1383.94 54.63 L1380.70 53.28 L1381.30 51.04 L1380.46 50.20 L1378.22 50.80 L1376.87 47.56 L1378.89 46.39 L1378.89 45.21 L1376.87 44.04 L1378.22 40.80 L1380.46 41.40 L1381.30 40.56 L1380.70 38.32 L1383.94 36.97 L1385.11 38.99Z M1380.80 45.80 a4.91 4.91 0 1 0 9.81 0 a4.91 4.91 0 1 0 -9.81 0Z" fill="#9fadbc" fill-rule="evenodd"/><circle cx="1385.7" cy="45.8" r="5.87" fill="none" stroke="#9fadbc" stroke-width="1.93"/></g></svg>
<svg class="b" style="left:1417.00px;top:33.00px;" width="26.00" height="26.00" viewBox="1417.00 33.00 26.00 26.00"><circle cx="1430" cy="46" r="12.200" fill="#8797a8"/><circle cx="1430" cy="40.900" r="3.900" fill="#1d2125"/><path d="M1424 48a2 2 0 0 1 2-2h8a2 2 0 0 1 2 2v4.500c0 1.400-2.500 2.500-6 2.500s-6-1.100-6-2.500z" fill="#1d2125"/></svg>
</div></div>
<div class="edge"></div>
</body></html>
